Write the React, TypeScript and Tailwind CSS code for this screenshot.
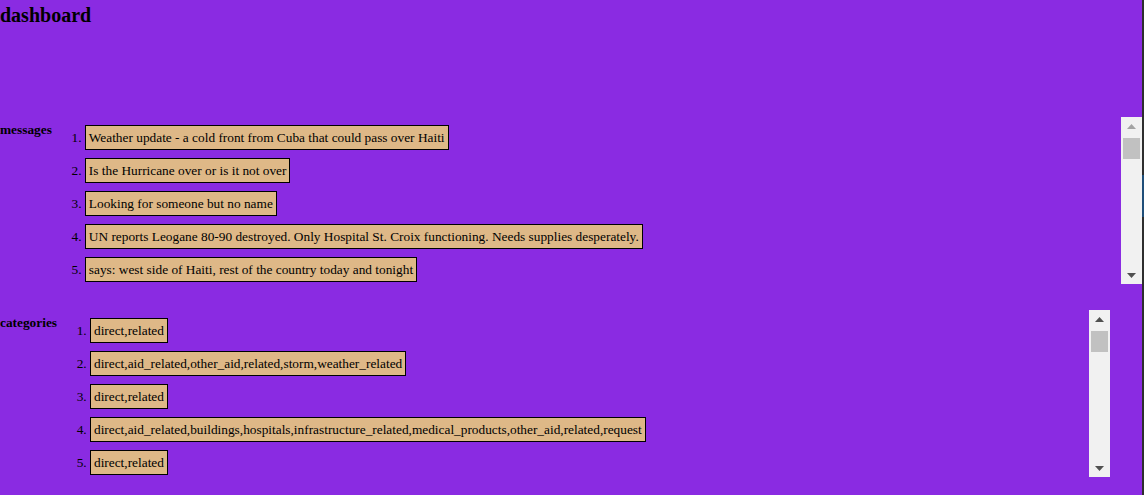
import React from "react";

const messages = [
  "Weather update - a cold front from Cuba that could pass over Haiti",
  "Is the Hurricane over or is it not over",
  "Looking for someone but no name",
  "UN reports Leogane 80-90 destroyed. Only Hospital St. Croix functioning. Needs supplies desperately.",
  "says: west side of Haiti, rest of the country today and tonight",
];

const categories = [
  "direct,related",
  "direct,aid_related,other_aid,related,storm,weather_related",
  "direct,related",
  "direct,aid_related,buildings,hospitals,infrastructure_related,medical_products,other_aid,related,request",
  "direct,related",
];

function Scrollbar({ upLight }: { upLight?: boolean }) {
  return (
    <div className="w-[21px] shrink-0 bg-[#f1f1f1] flex flex-col items-center">
      <div className="h-[17px] w-full flex items-center justify-center pt-[1px]">
        <svg width="9" height="5" viewBox="0 0 9 5">
          <polygon points="4.5,0 9,5 0,5" fill={upLight ? "#a3a3a3" : "#505050"} />
        </svg>
      </div>
      <div className="w-[17px] h-[21px] bg-[#c1c1c1] mt-[4px]" />
      <div className="flex-1" />
      <div className="h-[17px] w-full flex items-center justify-center pb-[1px]">
        <svg width="9" height="5" viewBox="0 0 9 5">
          <polygon points="0,0 9,0 4.5,5" fill="#505050" />
        </svg>
      </div>
    </div>
  );
}

function Row({ label, items, rightGap, upLight }: { label: string; items: string[]; rightGap: string; upLight?: boolean }) {
  return (
    <div className={`flex ${rightGap}`}>
      <div className="text-[13.33px] font-bold leading-[15px] pt-[5px] text-black">{label}</div>
      <div className="flex-1 flex h-[167px]">
        <div className="flex-1 overflow-hidden">
          <ol className="list-decimal pl-[33px] pt-[8px] text-[13.33px] leading-[15px] text-black">
            {items.map((t, i) => (
              <li key={i} className="mb-[8px] whitespace-nowrap">
                <span className="inline-block border border-black bg-[#deb887] px-[3px] py-[4px]">{t}</span>
              </li>
            ))}
          </ol>
        </div>
        <Scrollbar upLight={upLight} />
      </div>
    </div>
  );
}

export default function App() {
  return (
    <div className="min-h-[495px] h-[495px] bg-[#8a2be2] flex overflow-hidden" style={{ fontFamily: '"Liberation Serif", "Times New Roman", serif' }}>
      <div className="flex-1 flex flex-col">
        <h1 className="text-[20px] font-bold leading-[23px] pt-[4px] text-black m-0">dashboard</h1>
        <div className="mt-[90px]">
          <Row label="messages" items={messages} rightGap="mr-0" upLight />
        </div>
        <div className="mt-[26px]">
          <Row label="categories" items={categories} rightGap="mr-[32px]" />
        </div>
      </div>
      <div className="w-[2px] bg-[#2e2e2e] flex flex-col">
        <div className="h-[175px]" />
        <div className="h-[42px] bg-[#1f4e79]" />
      </div>
    </div>
  );
}
